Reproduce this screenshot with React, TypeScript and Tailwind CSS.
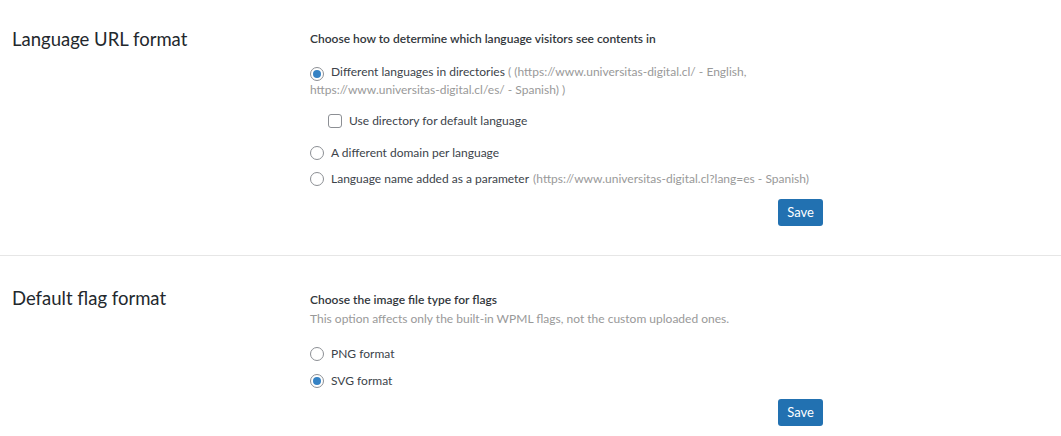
import type { ReactNode } from "react"

const font = { fontFamily: 'Lato, "Open Sans", Arial, sans-serif' }

function Radio({ checked }: { checked?: boolean }) {
  return (
    <span className="inline-flex h-[14px] w-[14px] shrink-0 items-center justify-center rounded-full border border-[#8c8f94] bg-white align-[-2px]">
      {checked && <span className="h-[8px] w-[8px] rounded-full bg-[#3582c4]" />}
    </span>
  )
}

function Checkbox() {
  return <span className="inline-block h-[14px] w-[14px] shrink-0 rounded-[3px] border border-[#8c8f94] bg-white" />
}

function SaveButton() {
  return (
    <div className="flex justify-end">
      <button className="h-[27px] rounded-[3px] bg-[#2271b1] px-[9px] text-[13px] text-white">Save</button>
    </div>
  )
}

function Section({ title, children, border, top }: { title: string; children: ReactNode; border?: boolean; top: string }) {
  return (
    <div className={`flex ${border ? "border-b border-[#e6e6e6]" : ""}`}>
      <div className={`w-[310px] shrink-0 pl-[12px] ${top}`}>
        <h3 className="text-[18.5px] leading-[26px] text-[#23282d]">{title}</h3>
      </div>
      <div className="w-[513px]">{children}</div>
    </div>
  )
}

export default function App() {
  return (
    <div className="h-[436px] w-[1061px] overflow-hidden bg-white text-[12px] text-[#3c434a]" style={font}>
      <Section title="Language URL format" border top="pt-[26px]">
        <div className="pb-[29px] pt-[29px]">
          <p className="font-semibold leading-[20px] text-[#32373c]">
            Choose how to determine which language visitors see contents in
          </p>
          <div className="mt-[14px] whitespace-nowrap leading-[17px]">
            <Radio checked />
            <span className="ml-[7px]">Different languages in directories</span>{" "}
            <span className="text-[#999]">
              ( (https://www.universitas-digital.cl/ - English,
              <br />
              https://www.universitas-digital.cl/es/ - Spanish) )
            </span>
          </div>
          <div className="mt-[14px] flex h-[17px] items-center whitespace-nowrap pl-[18px]">
            <Checkbox />
            <span className="ml-[7px]">Use directory for default language</span>
          </div>
          <div className="mt-[15px] flex h-[17px] items-center whitespace-nowrap">
            <Radio />
            <span className="ml-[7px]">A different domain per language</span>
          </div>
          <div className="mt-[9px] flex h-[17px] items-center whitespace-nowrap">
            <Radio />
            <span className="ml-[7px]">Language name added as a parameter</span>
            <span className="ml-[4px] text-[#999]">(https://www.universitas-digital.cl?lang=es - Spanish)</span>
          </div>
          <div className="mt-[12px]">
            <SaveButton />
          </div>
        </div>
      </Section>
      <Section title="Default flag format" top="pt-[29px]">
        <div className="pt-[34px]">
          <p className="font-semibold leading-[19px] text-[#32373c]">Choose the image file type for flags</p>
          <p className="leading-[19px] text-[#999]">
            This option affects only the built-in WPML flags, not the custom uploaded ones.
          </p>
          <div className="mt-[17px] flex h-[17px] items-center whitespace-nowrap">
            <Radio />
            <span className="ml-[7px]">PNG format</span>
          </div>
          <div className="mt-[10px] flex h-[17px] items-center whitespace-nowrap">
            <Radio checked />
            <span className="ml-[7px]">SVG format</span>
          </div>
          <div className="mt-[10px]">
            <SaveButton />
          </div>
        </div>
      </Section>
    </div>
  )
}
